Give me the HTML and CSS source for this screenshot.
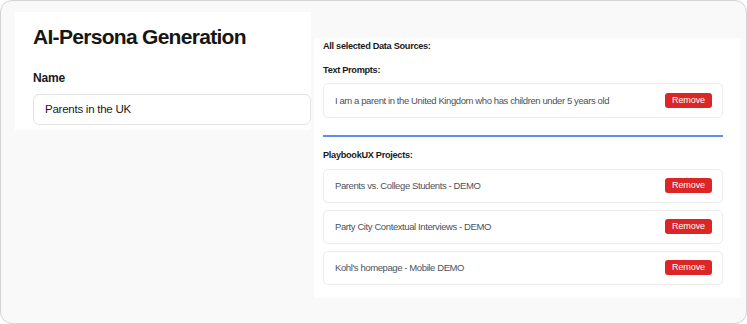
FILE: index.html
```html
<!DOCTYPE html>
<html>
<head>
<meta charset="utf-8">
<link rel="stylesheet" href="styles.css">
</head>
<body>
<div class="frame">
  <section class="left">
    <h1 class="title">AI-Persona Generation</h1>
    <label class="label">Name</label>
    <div class="input">Parents in the UK</div>
  </section>
  <section class="right">
    <div class="heading">All selected Data Sources:</div>
    <div class="subheading">Text Prompts:</div>
    <div class="item prompt"><span>I am a parent in the United Kingdom who has children under 5 years old</span><button class="remove">Remove</button></div>
    <hr class="divider">
    <div class="subheading">PlaybookUX Projects:</div>
    <div class="list">
      <div class="item"><span>Parents vs. College Students - DEMO</span><button class="remove">Remove</button></div>
      <div class="item"><span>Party City Contextual Interviews - DEMO</span><button class="remove">Remove</button></div>
      <div class="item"><span>Kohl's homepage - Mobile DEMO</span><button class="remove">Remove</button></div>
    </div>
  </section>
</div>
</body>
</html>
```
FILE: styles.css
```css
html, body { margin: 0; padding: 0; background: #ffffff; }
body { font-family: "Liberation Sans", Arial, sans-serif; color: #111; }
.frame {
  width: 747px; height: 324px; box-sizing: border-box;
  border: 1px solid #d4d4d4; border-radius: 12px;
  background: #f9f9f9;
  display: flex; align-items: flex-start;
  padding: 11px 6px 0 14px;
}
.left {
  width: 296px; height: 118px; box-sizing: border-box;
  background: #ffffff; padding: 0 0 0 18px;
}
.title { margin: 12px 0 0; font-size: 21px; font-weight: 700; letter-spacing: -0.7px; line-height: 26px; color: #161616; }
.label { display: block; margin-top: 20px; font-size: 12px; font-weight: 700; letter-spacing: -0.2px; line-height: 16px; color: #1a1a1a; }
.input {
  margin-top: 8px; width: 278px; height: 31px; box-sizing: border-box;
  border: 1px solid #e3e3e3; border-radius: 6px; background: #fff;
  padding: 0 11px; font-size: 11.5px; letter-spacing: -0.25px; line-height: 29px; color: #1a1a1a;
}
.right {
  margin-left: 3px; margin-top: 26px;
  width: 427px; height: 260px; box-sizing: border-box;
  background: #ffffff; padding: 1.5px 17px 0 9px;
}
.heading { font-size: 9.2px; font-weight: 700; letter-spacing: -0.3px; line-height: 13px; color: #1a1a1a; }
.subheading { font-size: 9.2px; font-weight: 700; letter-spacing: -0.3px; line-height: 13px; color: #1a1a1a; margin-top: 11px; margin-bottom: 6.5px; }
.item {
  height: 34px; box-sizing: border-box;
  border: 1px solid #ececec; border-radius: 5px; background: #fff;
  display: flex; align-items: center; justify-content: space-between;
  padding: 0 10px 0 11px;
  font-size: 9.5px; letter-spacing: -0.4px; color: #4b5260; white-space: nowrap;
}
.item.prompt { height: 35px; }
.remove {
  width: 47px; height: 15px; padding: 0; border: none; border-radius: 3px;
  background: #dc2626; color: #fff; font-family: inherit; font-size: 9px; letter-spacing: -0.1px; line-height: 15px;
}
.divider { margin: 17px 0 12px; border: none; border-top: 2px solid #5b8def; }
.list { display: flex; flex-direction: column; gap: 7px; }
```
